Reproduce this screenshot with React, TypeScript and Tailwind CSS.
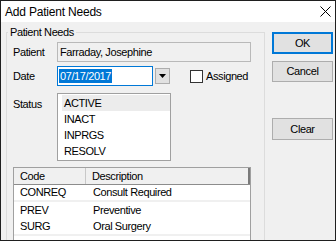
import React from 'react';

const statuses = ['ACTIVE', 'INACT', 'INPRGS', 'RESOLV'];

const needs = [
    {code: 'CONREQ', desc: 'Consult Required', line: true},
    {code: 'PREV', desc: 'Preventive', line: false},
    {code: 'SURG', desc: 'Oral Surgery', line: true},
];

const App = () => {
    return (
        <div className="w-[336px] h-[241px] overflow-hidden border border-[#1f1f1f] bg-[#f0f0f0] flex flex-col font-['Liberation_Sans',Arial,sans-serif] text-[11px] tracking-[-0.4px] text-black">
            {/* title bar */}
            <div className="h-[21px] shrink-0 bg-white flex items-center justify-between pl-[4px] pr-[4px]">
                <span className="text-[12px] tracking-[-0.2px]">Add Patient Needs</span>
                <svg width="11" height="11" viewBox="0 0 11 11">
                    <path d="M0.5 0.5 L10.5 10.5 M10.5 0.5 L0.5 10.5" stroke="#000" strokeWidth="1"/>
                </svg>
            </div>

            <div className="flex flex-1 min-h-0 pl-[5px] pt-[4px]">
                <fieldset className="w-[259px] shrink-0 border border-[#dcdcdc] h-[240px]">
                    <legend className="ml-[1px] px-[2px] leading-[13px]">Patient Needs</legend>
                    <div className="pl-[6px] pt-[3px]">
                        <div className="flex items-center h-[20px]">
                            <span className="w-[44px]">Patient</span>
                            <div className="w-[194px] h-[20px] border border-[#b9b9b9] bg-[#f0f0f0] flex items-center px-[2px]">
                                Farraday, Josephine
                            </div>
                        </div>

                        <div className="flex items-center h-[20px] mt-[4px]">
                            <span className="w-[44px]">Date</span>
                            <div className="w-[96px] h-[20px] border border-[#0078d7] bg-white flex items-center px-[1px]">
                                <span className="bg-[#0078d7] text-white leading-[14px] px-[1px]">07/17/2017</span>
                            </div>
                            <div className="ml-[2px] w-[15px] h-[16px] border border-[#adadad] bg-[#e1e1e1] flex items-center justify-center">
                                <svg width="7" height="4" viewBox="0 0 7 4">
                                    <path d="M0 0 L7 0 L3.5 4 Z" fill="#000"/>
                                </svg>
                            </div>
                            <div className="ml-[20px] w-[13px] h-[13px] border border-[#333] bg-white"/>
                            <span className="ml-[3px]">Assigned</span>
                        </div>

                        <div className="flex items-start mt-[7px]">
                            <span className="w-[44px] mt-[3px]">Status</span>
                            <div className="w-[114px] border border-[#a0a0a0] bg-white py-[1px]">
                                {statuses.map((s, i) => (
                                    <div key={s}
                                         className={i === 0
                                             ? 'h-[16px] flex items-center ml-[4px] pl-[2px] bg-[#ececec]'
                                             : 'h-[16px] flex items-center pl-[6px]'}>
                                        {s}
                                    </div>
                                ))}
                            </div>
                        </div>

                        <div className="mt-[6px] w-[238px] h-[90px] border border-[#a0a0a0] bg-white">
                            <div className="flex h-[17px] bg-[#f0f0f0] border-b border-[#8c8c8c]">
                                <div className="w-[72px] flex items-center pl-[6px] border-r border-[#c8c8c8]">Code</div>
                                <div className="flex-1 flex items-center pl-[6px] border-r-2 border-[#7a7a7a]">Description</div>
                            </div>
                            {needs.map((n) => (
                                <div key={n.code}
                                     className={`flex h-[17px] ${n.line ? 'border-b-2 border-[#f0f0f0]' : ''}`}>
                                    <div className="w-[72px] flex items-center pl-[6px]">{n.code}</div>
                                    <div className="flex-1 flex items-center pl-[7px]">{n.desc}</div>
                                </div>
                            ))}
                        </div>
                    </div>
                </fieldset>

                <div className="ml-[7px] flex flex-col w-[61px]">
                    <button className="mt-[6px] h-[22px] border border-[#0078d7] shadow-[inset_0_0_0_1px_#0078d7] bg-[#e1e1e1]">OK</button>
                    <button className="mt-[7px] h-[21px] border border-[#adadad] bg-[#e1e1e1]">Cancel</button>
                    <button className="mt-[36px] h-[22px] border border-[#adadad] bg-[#e1e1e1]">Clear</button>
                </div>
            </div>
        </div>
    );
};

export default App;
